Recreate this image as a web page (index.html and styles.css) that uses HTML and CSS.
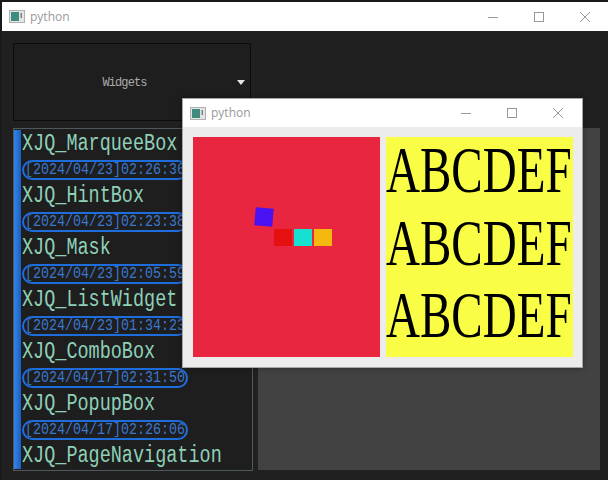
FILE: index.html
```html
<!DOCTYPE html>
<html>
<head>
<meta charset="utf-8">
<link rel="stylesheet" href="styles.css">
</head>
<body>
<div class="win main">
  <div class="titlebar">
    <svg class="tb-icon" width="16" height="13" viewBox="0 0 16 13"><rect x="0.5" y="0.5" width="15" height="12" fill="#e4e4e4" stroke="#b0b0b0"/><rect x="2" y="2" width="8" height="9" fill="#3f8c7e"/><rect x="11.5" y="3" width="1.5" height="5" fill="#808080"/></svg>
    <span class="tb-title">python</span>
    <div class="tb-controls">
      <div class="tb-btn"><svg width="10" height="10" viewBox="0 0 10 10"><path d="M0 5.5H10" stroke="#999" stroke-width="1"/></svg></div>
      <div class="tb-btn"><svg width="10" height="10" viewBox="0 0 10 10"><rect x="0.5" y="0.5" width="9" height="9" fill="none" stroke="#999"/></svg></div>
      <div class="tb-btn"><svg width="10" height="10" viewBox="0 0 10 10"><path d="M0 0L10 10M10 0L0 10" stroke="#999" stroke-width="1"/></svg></div>
    </div>
  </div>
  <div class="main-body">
    <div class="combo">
      <span class="combo-label">Widgets</span>
      <span class="combo-arrow"></span>
    </div>
    <div class="row">
      <div class="list">
        <div class="bar"></div>
        <ul class="items">
          <li class="name"><span>XJQ_MarqueeBox</span></li>
          <li class="date"><div class="pill"><span>[2024/04/23]02:26:36</span></div></li>
          <li class="name"><span>XJQ_HintBox</span></li>
          <li class="date"><div class="pill"><span>[2024/04/23]02:23:38</span></div></li>
          <li class="name"><span>XJQ_Mask</span></li>
          <li class="date"><div class="pill"><span>[2024/04/23]02:05:59</span></div></li>
          <li class="name"><span>XJQ_ListWidget</span></li>
          <li class="date"><div class="pill"><span>[2024/04/23]01:34:23</span></div></li>
          <li class="name"><span>XJQ_ComboBox</span></li>
          <li class="date"><div class="pill"><span>[2024/04/17]02:31:50</span></div></li>
          <li class="name"><span>XJQ_PopupBox</span></li>
          <li class="date"><div class="pill"><span>[2024/04/17]02:26:06</span></div></li>
          <li class="name"><span>XJQ_PageNavigation</span></li>
        </ul>
      </div>
      <div class="view"></div>
    </div>
  </div>
</div>

<div class="win popup">
  <div class="titlebar">
    <svg class="tb-icon" width="16" height="13" viewBox="0 0 16 13"><rect x="0.5" y="0.5" width="15" height="12" fill="#e4e4e4" stroke="#b0b0b0"/><rect x="2" y="2" width="8" height="9" fill="#3f8c7e"/><rect x="11.5" y="3" width="1.5" height="5" fill="#808080"/></svg>
    <span class="tb-title">python</span>
    <div class="tb-controls">
      <div class="tb-btn"><svg width="10" height="10" viewBox="0 0 10 10"><path d="M0 5.5H10" stroke="#999" stroke-width="1"/></svg></div>
      <div class="tb-btn"><svg width="10" height="10" viewBox="0 0 10 10"><rect x="0.5" y="0.5" width="9" height="9" fill="none" stroke="#999"/></svg></div>
      <div class="tb-btn"><svg width="10" height="10" viewBox="0 0 10 10"><path d="M0 0L10 10M10 0L0 10" stroke="#999" stroke-width="1"/></svg></div>
    </div>
  </div>
  <div class="client">
    <div class="panel red">
      <div class="sq purple"></div>
      <div class="sq-row">
        <div class="sq s-red"></div>
        <div class="sq s-cyan"></div>
        <div class="sq s-orange"></div>
      </div>
    </div>
    <div class="panel yellow">
      <div class="abc">
        <div class="abc-line">ABCDEF</div>
        <div class="abc-line">ABCDEF</div>
        <div class="abc-line">ABCDEF</div>
      </div>
    </div>
  </div>
</div>
</body>
</html>
```

FILE: styles.css
```css
html, body {
  margin: 0;
  padding: 0;
}
body {
  width: 608px;
  height: 480px;
  overflow: hidden;
  position: relative;
  background: #1a1a1c;
  font-family: "Open Sans", "Liberation Sans", sans-serif;
}

.main {
  margin: 2px 0 0 2px;
  width: 606px;
  height: 478px;
  background: #202020;
  display: flex;
  flex-direction: column;
}

.titlebar {
  flex: none;
  height: 29px;
  background: #ffffff;
  display: flex;
  align-items: center;
}
.tb-icon {
  flex: none;
  margin-left: 7px;
}
.tb-title {
  margin-left: 5px;
  font-size: 12px;
  color: #9a9a9a;
  line-height: 16px;
}
.tb-controls {
  margin-left: auto;
  display: flex;
  height: 100%;
}
.tb-btn {
  width: 46px;
  height: 100%;
  display: flex;
  align-items: center;
  justify-content: center;
}

.main-body {
  flex: 1;
  padding: 12px 0 0 11px;
  display: flex;
  flex-direction: column;
  gap: 7px;
}

.combo {
  width: 238px;
  height: 78px;
  box-sizing: border-box;
  border: 1px solid #0c0c0c;
  background: #1e1e1e;
  display: flex;
  align-items: center;
}
.combo-label {
  flex: 1;
  text-align: center;
  padding-top: 2px;
  font-family: "Liberation Mono", monospace;
  font-size: 12px;
  letter-spacing: -0.9px;
  color: #ababab;
}
.combo-arrow {
  width: 0;
  height: 0;
  margin: 0 5px 0 2px;
  border-left: 4.5px solid transparent;
  border-right: 4.5px solid transparent;
  border-top: 5px solid #e4e4e4;
}

.row {
  display: flex;
  gap: 5px;
  align-items: flex-start;
}
.list {
  width: 240px;
  height: 343px;
  box-sizing: border-box;
  border: 1px solid #4f585c;
  background: #1e1e1e;
  display: flex;
  overflow: hidden;
}
.bar {
  flex: none;
  width: 7px;
  margin: 1px 0;
  background: linear-gradient(90deg, #3286e8, #1c5fc0);
}
.items {
  list-style: none;
  margin: 0;
  padding: 2px 0 0 1px;
  flex: 1;
  min-width: 0;
}
.name {
  height: 26px;
  line-height: 26px;
  white-space: nowrap;
}
.name span {
  display: inline-block;
  font-family: "Liberation Mono", monospace;
  font-size: 23px;
  color: #8ed0b8;
  transform: scaleX(0.804);
  transform-origin: left center;
}
.date {
  height: 26px;
  display: flex;
  align-items: center;
}
.pill {
  flex: none;
  width: 166px;
  height: 20px;
  box-sizing: border-box;
  border: 2px solid #1f6ddc;
  border-radius: 10px;
  display: flex;
  align-items: center;
  padding-left: 1px;
  overflow: hidden;
}
.pill span {
  display: inline-block;
  white-space: nowrap;
  font-family: "Liberation Mono", monospace;
  font-size: 17px;
  line-height: 16px;
  color: #3a77cf;
  transform: scaleX(0.784);
  transform-origin: left center;
}
.view {
  width: 342px;
  height: 342px;
  background: #424242;
}

.popup {
  position: absolute;
  left: 182px;
  top: 98px;
  width: 401px;
  height: 270px;
  box-sizing: border-box;
  border: 1px solid #a6a6a6;
  background: #ececec;
  display: flex;
  flex-direction: column;
  box-shadow: 0 0 6px rgba(0, 0, 0, 0.35);
}
.popup .titlebar {
  height: 28px;
}
.popup .tb-controls {
  margin-right: 1px;
}
.client {
  flex: 1;
  display: flex;
  gap: 6px;
  padding: 10px 9px 10px 10px;
}
.panel {
  flex: 1 1 0;
  min-width: 0;
  position: relative;
}
.red {
  background: #e9263f;
}
.yellow {
  background: #f9fd45;
}
.sq {
  width: 18px;
  height: 17px;
}
.purple {
  position: absolute;
  left: 62px;
  top: 71px;
  width: 18px;
  height: 18px;
  background: #4a12f0;
  transform: rotate(5deg);
}
.sq-row {
  position: absolute;
  left: 81px;
  top: 92px;
  display: flex;
  gap: 2px;
}
.s-red { background: #e51111; }
.s-cyan { background: #16e0d0; }
.s-orange { background: #f5b80f; }

.abc {
  margin-top: -3px;
  font-family: "Liberation Serif", serif;
  font-size: 65px;
  line-height: 72.5px;
  color: #000;
}
.abc-line {
  white-space: nowrap;
  transform: scaleX(0.724);
  transform-origin: left center;
}
```
